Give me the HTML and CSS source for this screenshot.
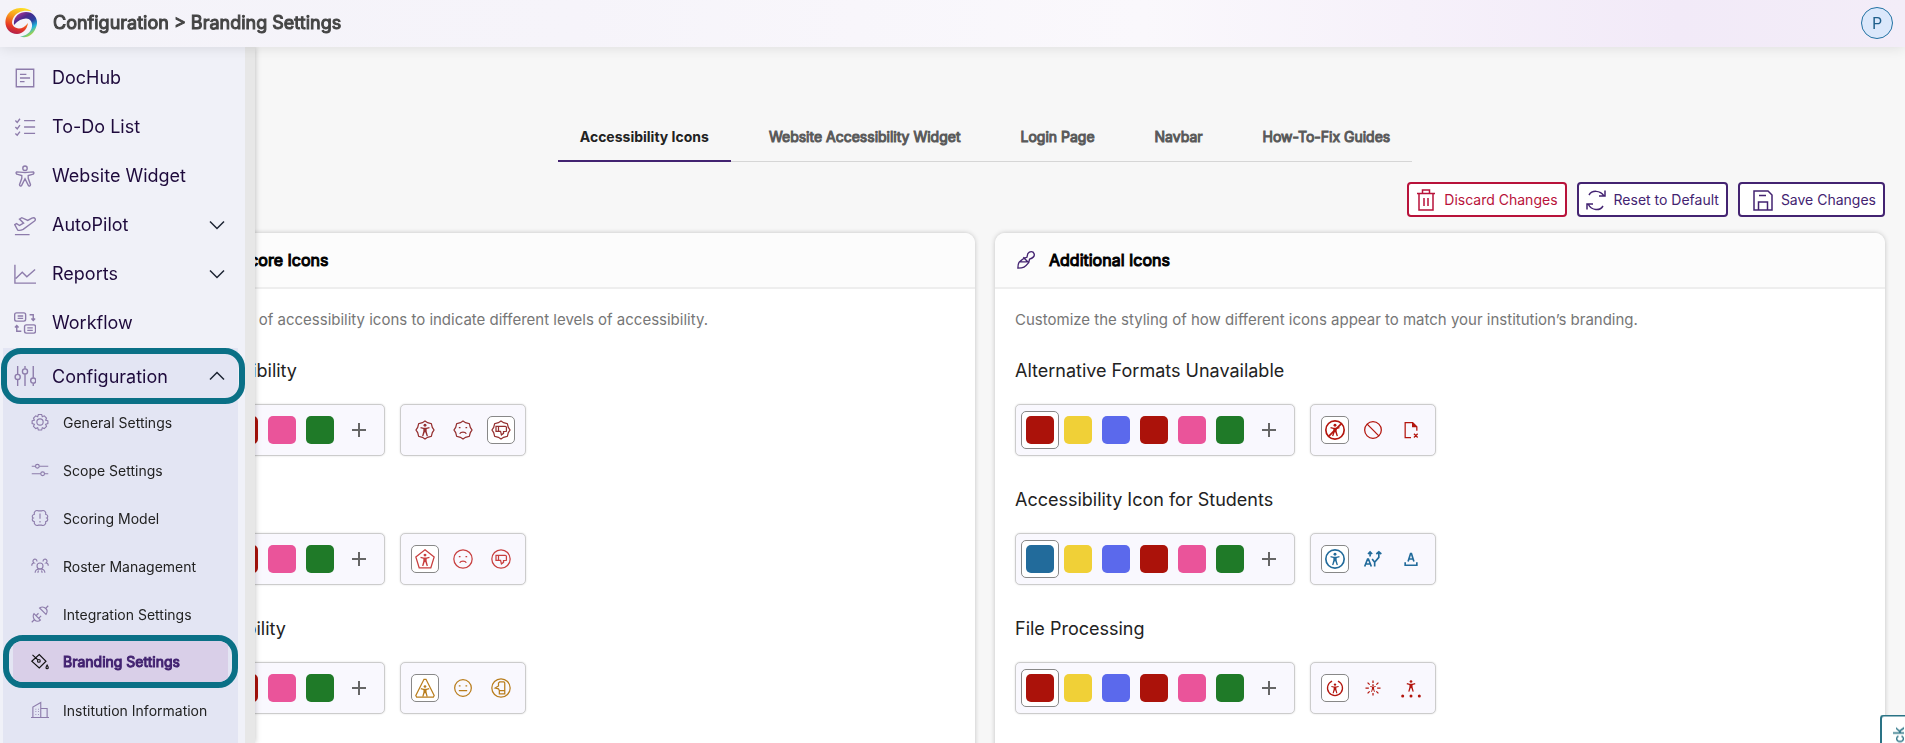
FILE: index.html
```html
<!DOCTYPE html>
<html lang="en">
<head>
  <meta charset="UTF-8">
  <meta name="viewport" content="width=device-width, initial-scale=1.0">
  <title>Branding Settings</title>
  <link rel="stylesheet" href="styles.css">
</head>
<body>
  <!-- shared icon shapes -->
  <svg class="sprite" aria-hidden="true">
    <symbol id="person" viewBox="0 0 24 24"><circle cx="12" cy="3.500" r="2.600"/><path d="M4.200 6.500 9.500 7.800h5l5.300-1.300.5 2.200-5.300 1.400v4l2.300 8.700-2.200.6L12.600 16h-1.200l-2.500 7.400-2.200-.6L9 14.100v-4L3.700 8.700z"/></symbol>
    <symbol id="badge" viewBox="0 0 24 24"><path d="M12 1.200 15.100 3.200 19.600 4.400 20.800 8.900 22.800 12 20.800 15.100 19.600 19.600 15.100 20.800 12 22.800 8.900 20.800 4.400 19.600 3.200 15.100 1.200 12 3.200 8.900 4.400 4.400 8.900 3.200z"/></symbol>
    <symbol id="sad" viewBox="0 0 24 24"><path d="M7 9h2M15 9h2M8 16.500c1.500-2.600 6.500-2.600 8 0"/></symbol>
    <symbol id="thumb" viewBox="0 0 24 24"><path d="M6 7.500h3v6H6zM9 7.500h8l1.500 1v5l-3.500.5v2l-2.500 2-1-4.500H9"/></symbol>
  </svg>

  <header class="topbar">
    <svg class="logo" viewBox="0 0 32 30" aria-hidden="true">
      <defs>
        <linearGradient id="warm" x1=".7" y1="0" x2=".4" y2="1"><stop offset="0" stop-color="#fde32a"/><stop offset=".4" stop-color="#f8951d"/><stop offset=".75" stop-color="#e83a24"/><stop offset="1" stop-color="#b51f4a"/></linearGradient>
        <linearGradient id="cool" x1="0" y1="0" x2=".6" y2="1"><stop offset="0" stop-color="#d9369a"/><stop offset=".35" stop-color="#4b2a8c"/><stop offset=".6" stop-color="#2b3f9e"/><stop offset=".8" stop-color="#22b5dc"/><stop offset="1" stop-color="#b5d838"/></linearGradient>
      </defs>
      <path fill="url(#warm)" d="M27 3.500C20-2 8-1 3 6c-6 9-1 20 9 20 6-.3 10-4.500 11-11-3 4-6 5.500-9 5.500-6-.5-8.500-5-6-10C11 4 19 1.500 27 3.500z"/>
      <path fill="url(#cool)" d="M9 17C8 9 14 4 21 4c9 0 12.500 8 10.500 14C29 27 22 31 15 28.500c6-.5 11-4 12-10 .5-4-1.500-8-6-8-4 0-8 2-12 6.500z"/>
    </svg>
    <h1>Configuration &gt; Branding Settings</h1>
    <button class="avatar" aria-label="Profile">P</button>
  </header>

  <nav class="sidebar" aria-label="Main">
    <a class="item" href="#"><svg viewBox="0 0 24 24"><path d="M2.500 2.500h19v19h-19zM6.500 8h7M6.500 12h11M6.500 16h5"/></svg><span>DocHub</span></a>
    <a class="item" href="#"><svg viewBox="0 0 24 24"><path d="m1.500 5 2 2 3-4M1.500 12l2 2 3-4M1.500 19l2 2 3-4M11 5h12M11 12h12M11 19h12"/></svg><span>To-Do List</span></a>
    <a class="item" href="#"><svg viewBox="0 0 24 24"><circle cx="12" cy="3.500" r="2.400"/><path d="M3 7.500c-1.500 1-.5 2.500 1 2.700l4.500 1.300v3L6 21.500c0 1.700 1.800 2 2.500.5L12 15l3.500 7c.7 1.500 2.500 1.200 2.500-.5l-2.500-7v-3l4.500-1.300c1.500-.2 2.500-1.700 1-2.700-2 0-5.500.7-9 .7S5 7.500 3 7.500z"/></svg><span>Website Widget</span></a>
    <a class="item" href="#"><svg viewBox="0 0 24 24"><path d="M1 22.500h16M4 17.500 0.800 11.500l2-1 3.200 2 4.500-2.500L6 5.500l2.500-1.500L15 7l4.500-2.500c3.500-1.200 5 1.300 2.500 3.500L10 16.700c-2 1-4 1.600-6 .8z"/></svg><span>AutoPilot</span><svg class="chev" viewBox="0 0 16 16"><path d="m1 4.500 7 7 7-7"/></svg></a>
    <a class="item" href="#"><svg viewBox="0 0 24 24"><path d="M1 2v20h23M2 17l7-7 5 5 9-8"/></svg><span>Reports</span><svg class="chev" viewBox="0 0 16 16"><path d="m1 4.500 7 7 7-7"/></svg></a>
    <a class="item" href="#"><svg viewBox="0 0 24 24"><rect x="0.700" y="1" width="12" height="9" rx="2"/><rect x="11.500" y="14" width="12" height="9" rx="2"/><path d="M4 4.300h6M4 7h6M14.500 17.300h6M14.500 20h6M17 3h4v6m-2-2 2 2.200L23 7M8 21H3v-6m-2 2 2-2.200L5 17"/></svg><span>Workflow</span></a>

    <div class="group">
      <div class="ring">
        <a class="item" href="#" aria-expanded="true"><svg viewBox="0 0 24 24"><path d="M4 1v9M4 16v7M12 1v3M12 10v13M21 1v13M21 20v3"/><circle cx="4" cy="13" r="2.800"/><circle cx="12" cy="7" r="2.800"/><circle cx="21" cy="17" r="2.800"/></svg><span>Configuration</span><svg class="chev" viewBox="0 0 16 16"><path d="m1 11.500 7-7 7 7"/></svg></a>
      </div>
      <a class="sub first" href="#"><svg viewBox="0 0 24 24"><circle cx="12" cy="12" r="4.200"/><path d="M9.800 2h4.400l.9 3 2.600-1.200 3 3-1.200 2.700 3 .9v3.800l-3 .9 1.200 2.700-3 3-2.600-1.200-.9 3H9.800l-.9-3-2.600 1.200-3-3 1.200-2.700-3-.9v-3.800l3-.9-1.200-2.700 3-3L8.900 5z"/></svg><span>General Settings</span></a>
      <a class="sub" href="#"><svg viewBox="0 0 24 24"><path d="M1 7h5M11 7h12M1 17h12M18 17h5"/><circle cx="8.500" cy="7" r="2.500"/><circle cx="15.500" cy="17" r="2.500"/></svg><span>Scope Settings</span></a>
      <a class="sub" href="#"><svg viewBox="0 0 24 24"><path d="M12 6v7M12 16v2M10 2.500C6 1 3.500 4 4.500 7 1 8 1 11 3 12c-2 1-2 4 1.500 5-1 3 2 6 5.500 4.500h4c3.500 1.500 6.500-1.500 5.500-4.500 3.500-1 3.500-4 1.500-5 2-1 2-4-1.500-5 1-3-1.500-6-5.500-4.500z"/></svg><span>Scoring Model</span></a>
      <a class="sub" href="#"><svg viewBox="0 0 24 24"><circle cx="12" cy="12" r="4"/><path d="M5.500 21c0-3 2-5 6.500-5s6.500 2 6.500 5M9 21l1-3M15 21l-1-3M8 6C8 3 5 2 3.500 3.500 2 5 2.500 7 4 8c-2 0-3 1.500-3 3.500M16 6c0-3 3-4 4.500-2.500 1.500 1.500 1 3.500-.5 4.500 2 0 3 1.500 3 3.500"/></svg><span>Roster Management</span></a>
      <a class="sub" href="#"><svg viewBox="0 0 24 24"><path d="m1 23 4-4M19 5l4-4M4 11.500l8.500 8.500c-2 2-5.500 2-7.500 0s-3-6-1-8.500zM11.500 4l8.500 8.500c2-3 2-5.500 0-7.500s-5.500-3-8.500-1zM7 14l3-3M10.500 17.500l3-3"/></svg><span>Integration Settings</span></a>
      <div class="ring small">
        <a class="sub active" href="#" aria-current="page"><svg viewBox="0 0 24 24"><path d="M2 2.500 9 9M1 11l10-9 9 9-9 9zM21.500 16c-2 3-2 5 0 5s2-2 0-5z"/><circle cx="10.500" cy="10.500" r="1.800"/></svg><span>Branding Settings</span></a>
      </div>
      <a class="sub" href="#"><svg viewBox="0 0 24 24"><path d="M0 22h24M2.500 22V8L13 2v20M13 10h8.500v12M6 11h1M6 14h1M6 18h1M9.500 11h1M9.500 14h1M9.500 18h1"/></svg><span>Institution Information</span></a>
    </div>
  </nav>

  <main>
    <div class="tabs" role="tablist">
      <button role="tab" aria-selected="true">Accessibility Icons</button>
      <button role="tab" aria-selected="false">Website Accessibility Widget</button>
      <button role="tab" aria-selected="false">Login Page</button>
      <button role="tab" aria-selected="false">Navbar</button>
      <button role="tab" aria-selected="false">How-To-Fix Guides</button>
    </div>

    <div class="actions">
      <button class="btn danger"><svg viewBox="0 0 20 22"><path d="M1 4.500h18M3 4.500V21h14V4.500M6.500 4V1h7v3M8 9v8M12 9v8"/></svg>Discard Changes</button>
      <button class="btn"><svg viewBox="0 0 20 22"><path d="M3 6C6 1 14 1 18 7M19 1.500V7h-6M17 17C14 22 6 22 2 15M1 20.500V15h6"/></svg>Reset to Default</button>
      <button class="btn save"><svg viewBox="0 0 20 22"><path d="M1 2h14l4 4v15H1zM5.500 21v-8h9v8M6 6.500h7"/></svg>Save Changes</button>
    </div>

    <div class="cards">
      <section class="card">
        <div class="card-head">
          <svg viewBox="0 0 20 20"><path d="M1 19c0-6 1-7 7-11l5 5c-4 5-6 6-12 6zM3 12h8M7 7l6 6M8 8l3-1 1-4c2-3 6-3 7 0s-2 5-5 6l-1 4"/></svg>
          <h2>Accessibility Score Icons</h2>
        </div>
        <div class="card-body">
          <p>Choose from a range of accessibility icons to indicate different levels of accessibility.</p>

          <h3>Very Low Accessibility</h3>
          <div class="row">
            <div class="box colors">
              <button class="swatch on red" aria-label="Dark red"></button><button class="swatch yellow" aria-label="Yellow"></button><button class="swatch blue" aria-label="Blue"></button><button class="swatch red" aria-label="Red"></button><button class="swatch pink" aria-label="Pink"></button><button class="swatch green" aria-label="Green"></button><button class="add" aria-label="Add color"></button>
            </div>
            <div class="box maroon">
              <button class="icon" aria-label="Person"><svg viewBox="0 0 24 24"><use href="#badge"/><use class="solid" href="#person" x="4" y="4" width="16" height="16"/></svg></button>
              <button class="icon" aria-label="Sad face"><svg viewBox="0 0 24 24"><use href="#badge"/><use href="#sad"/></svg></button>
              <button class="icon on" aria-label="Thumbs down"><svg viewBox="0 0 24 24"><use href="#badge"/><use href="#thumb"/></svg></button>
            </div>
          </div>

          <h3>Low Accessibility</h3>
          <div class="row">
            <div class="box colors">
              <button class="swatch on red" aria-label="Dark red"></button><button class="swatch yellow" aria-label="Yellow"></button><button class="swatch blue" aria-label="Blue"></button><button class="swatch red" aria-label="Red"></button><button class="swatch pink" aria-label="Pink"></button><button class="swatch green" aria-label="Green"></button><button class="add" aria-label="Add color"></button>
            </div>
            <div class="box scarlet">
              <button class="icon on" aria-label="Person"><svg viewBox="0 0 24 24"><path d="M12 1 23 9.500 19 22.500H5L1 9.500z"/><use class="solid" href="#person" x="4" y="5" width="16" height="16"/></svg></button>
              <button class="icon" aria-label="Sad face"><svg viewBox="0 0 24 24"><circle cx="12" cy="12" r="11"/><use href="#sad"/></svg></button>
              <button class="icon" aria-label="Thumbs down"><svg viewBox="0 0 24 24"><circle cx="12" cy="12" r="11"/><use href="#thumb"/></svg></button>
            </div>
          </div>

          <h3>Medium Accessibility</h3>
          <div class="row">
            <div class="box colors">
              <button class="swatch on yellow" aria-label="Amber"></button><button class="swatch yellow" aria-label="Yellow"></button><button class="swatch blue" aria-label="Blue"></button><button class="swatch red" aria-label="Red"></button><button class="swatch pink" aria-label="Pink"></button><button class="swatch green" aria-label="Green"></button><button class="add" aria-label="Add color"></button>
            </div>
            <div class="box amber">
              <button class="icon on" aria-label="Person"><svg viewBox="0 0 24 24"><path d="M10.800 1.500h2.400L23 21l-1 2H2l-1-2z"/><use class="solid" href="#person" x="4.500" y="8" width="15" height="15"/></svg></button>
              <button class="icon" aria-label="Neutral face"><svg viewBox="0 0 24 24"><circle cx="12" cy="12" r="10"/><path d="M7 9.500h2M15 9.500h2M7 15h10"/></svg></button>
              <button class="icon" aria-label="Thumb sideways"><svg viewBox="0 0 24 24"><circle cx="12" cy="12" r="11"/><path d="M10 15H16.500v4H10zM10 15l-1-2-4-1 4-2.500V6l1.500-1.500h5l1 1.500v9"/></svg></button>
            </div>
          </div>
        </div>
      </section>

      <section class="card">
        <div class="card-head">
          <svg viewBox="0 0 20 20"><path d="M1 19c0-6 1-7 7-11l5 5c-4 5-6 6-12 6zM3 12h8M7 7l6 6M8 8l3-1 1-4c2-3 6-3 7 0s-2 5-5 6l-1 4"/></svg>
          <h2>Additional Icons</h2>
        </div>
        <div class="card-body">
          <p>Customize the styling of how different icons appear to match your institution’s branding.</p>

          <h3>Alternative Formats Unavailable</h3>
          <div class="row">
            <div class="box colors">
              <button class="swatch on red" aria-label="Red"></button><button class="swatch yellow" aria-label="Yellow"></button><button class="swatch blue" aria-label="Blue"></button><button class="swatch red" aria-label="Red"></button><button class="swatch pink" aria-label="Pink"></button><button class="swatch green" aria-label="Green"></button><button class="add" aria-label="Add color"></button>
            </div>
            <div class="box crimson">
              <button class="icon on" aria-label="Person crossed out"><svg class="bold" viewBox="0 0 24 24"><circle cx="12" cy="12" r="11"/><use class="solid" href="#person" x="4" y="4" width="16" height="16"/><path d="M20 4 4 20"/></svg></button>
              <button class="icon" aria-label="Prohibited"><svg viewBox="0 0 24 24"><circle cx="12" cy="12" r="10"/><path d="m5 5 14 14"/></svg></button>
              <button class="icon" aria-label="File unavailable"><svg viewBox="0 0 24 24"><path d="M12 21H5V3h9l5 5v5M14 3v5h5M15.500 16.500l4.500 4.500M20 16.500 15.500 21"/><path class="solid" d="M13.500 3 19 8.500h-5.500z"/></svg></button>
            </div>
          </div>

          <h3>Accessibility Icon for Students</h3>
          <div class="row">
            <div class="box colors">
              <button class="swatch on steel" aria-label="Steel blue"></button><button class="swatch yellow" aria-label="Yellow"></button><button class="swatch blue" aria-label="Blue"></button><button class="swatch red" aria-label="Red"></button><button class="swatch pink" aria-label="Pink"></button><button class="swatch green" aria-label="Green"></button><button class="add" aria-label="Add color"></button>
            </div>
            <div class="box ocean">
              <button class="icon on" aria-label="Person"><svg class="bold" viewBox="0 0 24 24"><circle cx="12" cy="12" r="11"/><use class="solid" href="#person" x="4" y="4" width="16" height="16"/></svg></button>
              <button class="icon" aria-label="Letter and arrows"><svg class="bold" viewBox="0 0 24 24"><path d="m2 21 3.500-9h1L10 21M3.500 18h5M14 21v-5l-3-4M14 16l5-6V4M16 6l3-2.500L22 6M8.500 9V4M6 6l2.500-2.500L11 6"/></svg></button>
              <button class="icon" aria-label="Underlined letter"><svg class="bold" viewBox="0 0 24 24"><path d="m8.500 15 3-9.500h1l3 9.500M9.500 12h5M5 16v3.500h14V16"/></svg></button>
            </div>
          </div>

          <h3>File Processing</h3>
          <div class="row">
            <div class="box colors">
              <button class="swatch on red" aria-label="Red"></button><button class="swatch yellow" aria-label="Yellow"></button><button class="swatch blue" aria-label="Blue"></button><button class="swatch red" aria-label="Red"></button><button class="swatch pink" aria-label="Pink"></button><button class="swatch green" aria-label="Green"></button><button class="add" aria-label="Add color"></button>
            </div>
            <div class="box crimson">
              <button class="icon on" aria-label="Person in progress ring"><svg viewBox="0 0 24 24"><path d="M8.500 3.800a9 9 0 1 0 7 0"/><use class="solid" href="#person" x="5.500" y="6" width="13" height="13"/></svg></button>
              <button class="icon" aria-label="Person with rays"><svg viewBox="0 0 24 24"><path d="M12 3v3M12 18v3M3 12h4M17 12h4M5.500 5.500 8 8M16 16l2.500 2.500M5.500 18.500 8 16M16 8l2.500-2.500"/><use class="solid" href="#person" x="7" y="7" width="10" height="10"/></svg></button>
              <button class="icon" aria-label="Person with dots"><svg viewBox="0 0 24 24"><use class="solid" href="#person" x="4.500" y="2" width="15" height="15"/><g class="solid"><circle cx="2" cy="21.500" r="1.800"/><circle cx="12" cy="21.500" r="1.800"/><circle cx="22" cy="21.500" r="1.800"/></g></svg></button>
            </div>
          </div>
        </div>
      </section>
    </div>
  </main>

  <button class="feedback">Feedback</button>
</body>
</html>
```
FILE: styles.css
```css
* {
  box-sizing: border-box;
}
body {
  margin: 0;
  height: 100vh;
  overflow: hidden;
  background: #f7f7f7;
  font-family: Inter, "Liberation Sans", sans-serif;
  color: #222;
}
button {
  font-family: inherit;
  cursor: pointer;
}
a {
  text-decoration: none;
}
svg {
  fill: none;
  stroke: currentColor;
  stroke-width: 1.5;
  flex: none;
}
h1, h2, h3, p {
  margin: 0;
}
.sprite {
  display: none;
}
.solid {
  fill: currentColor;
  stroke: none;
}

/* top bar */
.topbar {
  position: relative;
  z-index: 3;
  display: flex;
  align-items: center;
  height: 47px;
  padding: 0 12px 2px 5px;
  background: linear-gradient(90deg, #f4f3f9, #f6f4fa 30%, #faf8fc 60%, #f2eaf8 88%, #f3edf8);
  box-shadow: 0 0 14px rgba(0, 0, 0, 0.12);
}
.logo {
  width: 32px;
  height: 30px;
  margin-right: 16px;
  stroke: none;
}
.topbar h1 {
  flex: 1;
  font-size: 18px;
  font-weight: 400;
  color: #444;
  -webkit-text-stroke: 1px #444;
}
.avatar {
  width: 32px;
  height: 32px;
  padding: 0;
  border: 1px solid #2372a3;
  border-radius: 50%;
  background: #dbe8fb;
  color: #1f5f8b;
  font-size: 16px;
}

/* slide-out menu, lies over the page */
.sidebar {
  position: fixed;
  top: 47px;
  bottom: 0;
  left: 0;
  z-index: 2;
  display: flex;
  flex-direction: column;
  width: 255px;
  padding-top: 6px;
  overflow: hidden;
  border-right: 10px solid #e7e7e7;
  background: #f0f1f8;
  box-shadow: 0 0 6px rgba(0, 0, 0, 0.25);
}
.item {
  display: flex;
  flex: none;
  align-items: center;
  height: 49px;
  padding: 0 20px 0 14px;
  color: #1e0a3c;
  font-size: 18px;
}
.item svg {
  width: 22px;
  height: 22px;
  margin-right: 16px;
  color: #8d7cab;
}
.item span {
  flex: 1;
}
.item .chev {
  width: 16px;
  height: 16px;
  margin: 0;
  color: #1d2433;
}
.group {
  flex: 1;
  margin: 1px 7px 0 3px;
  background: #e3e5f3;
}
.ring {
  margin: 0 -7px 0 -2px;
  border: 6px solid #0a7086;
  border-radius: 20px;
}
.ring .item {
  height: 44px;
  padding: 0 14px 0 7px;
}
.sub {
  display: flex;
  align-items: center;
  height: 48px;
  padding-left: 28px;
  color: #222;
  font-size: 14px;
}
.sub.first {
  margin-top: -6px;
}
.sub svg {
  width: 18px;
  height: 18px;
  margin-right: 14px;
  color: #8d7cab;
}
.ring.small {
  margin: -3px 0 -2px;
  overflow: hidden;
}
.ring.small .sub {
  height: 41px;
  margin: 0 4px;
  padding-left: 18px;
  background: #d9cfe8;
  color: #432371;
  -webkit-text-stroke: 1px #432371;
}
.ring.small svg {
  color: #111;
}

/* page */
main {
  padding: 63px 20px 0 85px;
}
.tabs {
  display: flex;
  justify-content: center;
  width: fit-content;
  height: 52px;
  margin: 0 auto;
  gap: 16px;
  border-bottom: 1px solid #d6d6d6;
}
.tabs button {
  height: 52px;
  padding: 2px 22px 0;
  border: 0;
  border-bottom: 2px solid transparent;
  background: none;
  color: #5a5a5a;
  font-size: 14px;
  font-weight: 400;
  -webkit-text-stroke: 1px #5a5a5a;
}
.tabs [aria-selected="true"] {
  border-color: #432371;
  color: #222;
  font-weight: 700;
  -webkit-text-stroke: 0;
}
.actions {
  display: flex;
  justify-content: flex-end;
  gap: 10px;
  margin: 20px 0 16px;
}
.btn {
  display: flex;
  align-items: center;
  gap: 8px;
  height: 35px;
  padding: 0 7px;
  border: 2px solid #432371;
  border-radius: 4px;
  background: #fff;
  color: #432371;
  font-size: 14px;
}
.btn svg {
  width: 20px;
  height: 22px;
}
.danger {
  border-color: #b8123a;
  color: #b8123a;
}
.save {
  padding-left: 13px;
}
.cards {
  display: grid;
  grid-template-columns: 1fr 1fr;
  gap: 20px;
}
.card {
  border-radius: 10px;
  background: #fff;
  box-shadow: 0 0 5px rgba(0, 0, 0, 0.22);
}
.card-head {
  display: flex;
  align-items: center;
  height: 56px;
  padding-left: 22px;
  gap: 14px;
  border-bottom: 2px solid #eee;
  border-radius: 10px 10px 0 0;
  background: #fcfcfc;
}
.card-head svg {
  width: 18px;
  height: 18px;
  color: #432371;
}
.card-head h2 {
  font-size: 16px;
  font-weight: 400;
  color: #000;
  -webkit-text-stroke: 1px #000;
}
.card-body {
  padding: 20px;
}
.card-body p {
  margin-bottom: 28px;
  color: #767676;
  font-size: 15px;
  line-height: 22px;
}
.card-body h3 {
  margin-bottom: 21px;
  font-size: 18px;
  font-weight: 400;
  line-height: 24px;
}
.row {
  display: flex;
  gap: 15px;
  margin-bottom: 32px;
}
.box {
  display: flex;
  align-items: center;
  height: 52px;
  padding: 0 5px;
  border: 1px solid #ccc;
  border-radius: 5px;
  background: #f9f8fe;
  box-shadow: 0 0 2px rgba(0, 0, 0, 0.15);
}
.colors {
  padding-right: 6px;
}
.swatch, .add {
  width: 38px;
  height: 38px;
  padding: 4px;
  border: 1px solid transparent;
  border-radius: 5px;
  background: none;
}
.swatch::before {
  content: "";
  display: block;
  height: 28px;
  border-radius: 5px;
  background: currentColor;
}
.swatch.on, .icon.on {
  border-color: #888;
  background: #fff;
}
.add {
  margin-left: 1px;
  background:
    linear-gradient(#666, #666) center / 14px 2px no-repeat,
    linear-gradient(#666, #666) center / 2px 14px no-repeat;
}
.red { color: #ab120a; }
.yellow { color: #f0d037; }
.blue { color: #5b69ec; }
.pink { color: #ea549a; }
.green { color: #1f7a28; }
.steel { color: #226b9b; }
.maroon { color: #953030; }
.scarlet { color: #c83f3f; }
.amber { color: #b97d1c; }
.crimson { color: #b3150d; }
.ocean { color: #226b9b; }
.icon {
  display: flex;
  align-items: center;
  justify-content: center;
  width: 28px;
  height: 28px;
  margin: 0 5px;
  padding: 0;
  border: 1px solid transparent;
  border-radius: 5px;
  background: none;
  color: inherit;
}
.icon svg {
  width: 20px;
  height: 20px;
}
.icon .bold {
  stroke-width: 2;
}

/* feedback tab, cut off by the window corner */
.feedback {
  position: fixed;
  top: 715px;
  right: -8px;
  z-index: 4;
  width: 33px;
  padding: 10px 8px;
  border: 2px solid #2a7385;
  border-radius: 4px;
  background: #fff;
  color: #2a7385;
  font-size: 14px;
  font-weight: 500;
  writing-mode: vertical-rl;
  transform: rotate(180deg);
}
```
